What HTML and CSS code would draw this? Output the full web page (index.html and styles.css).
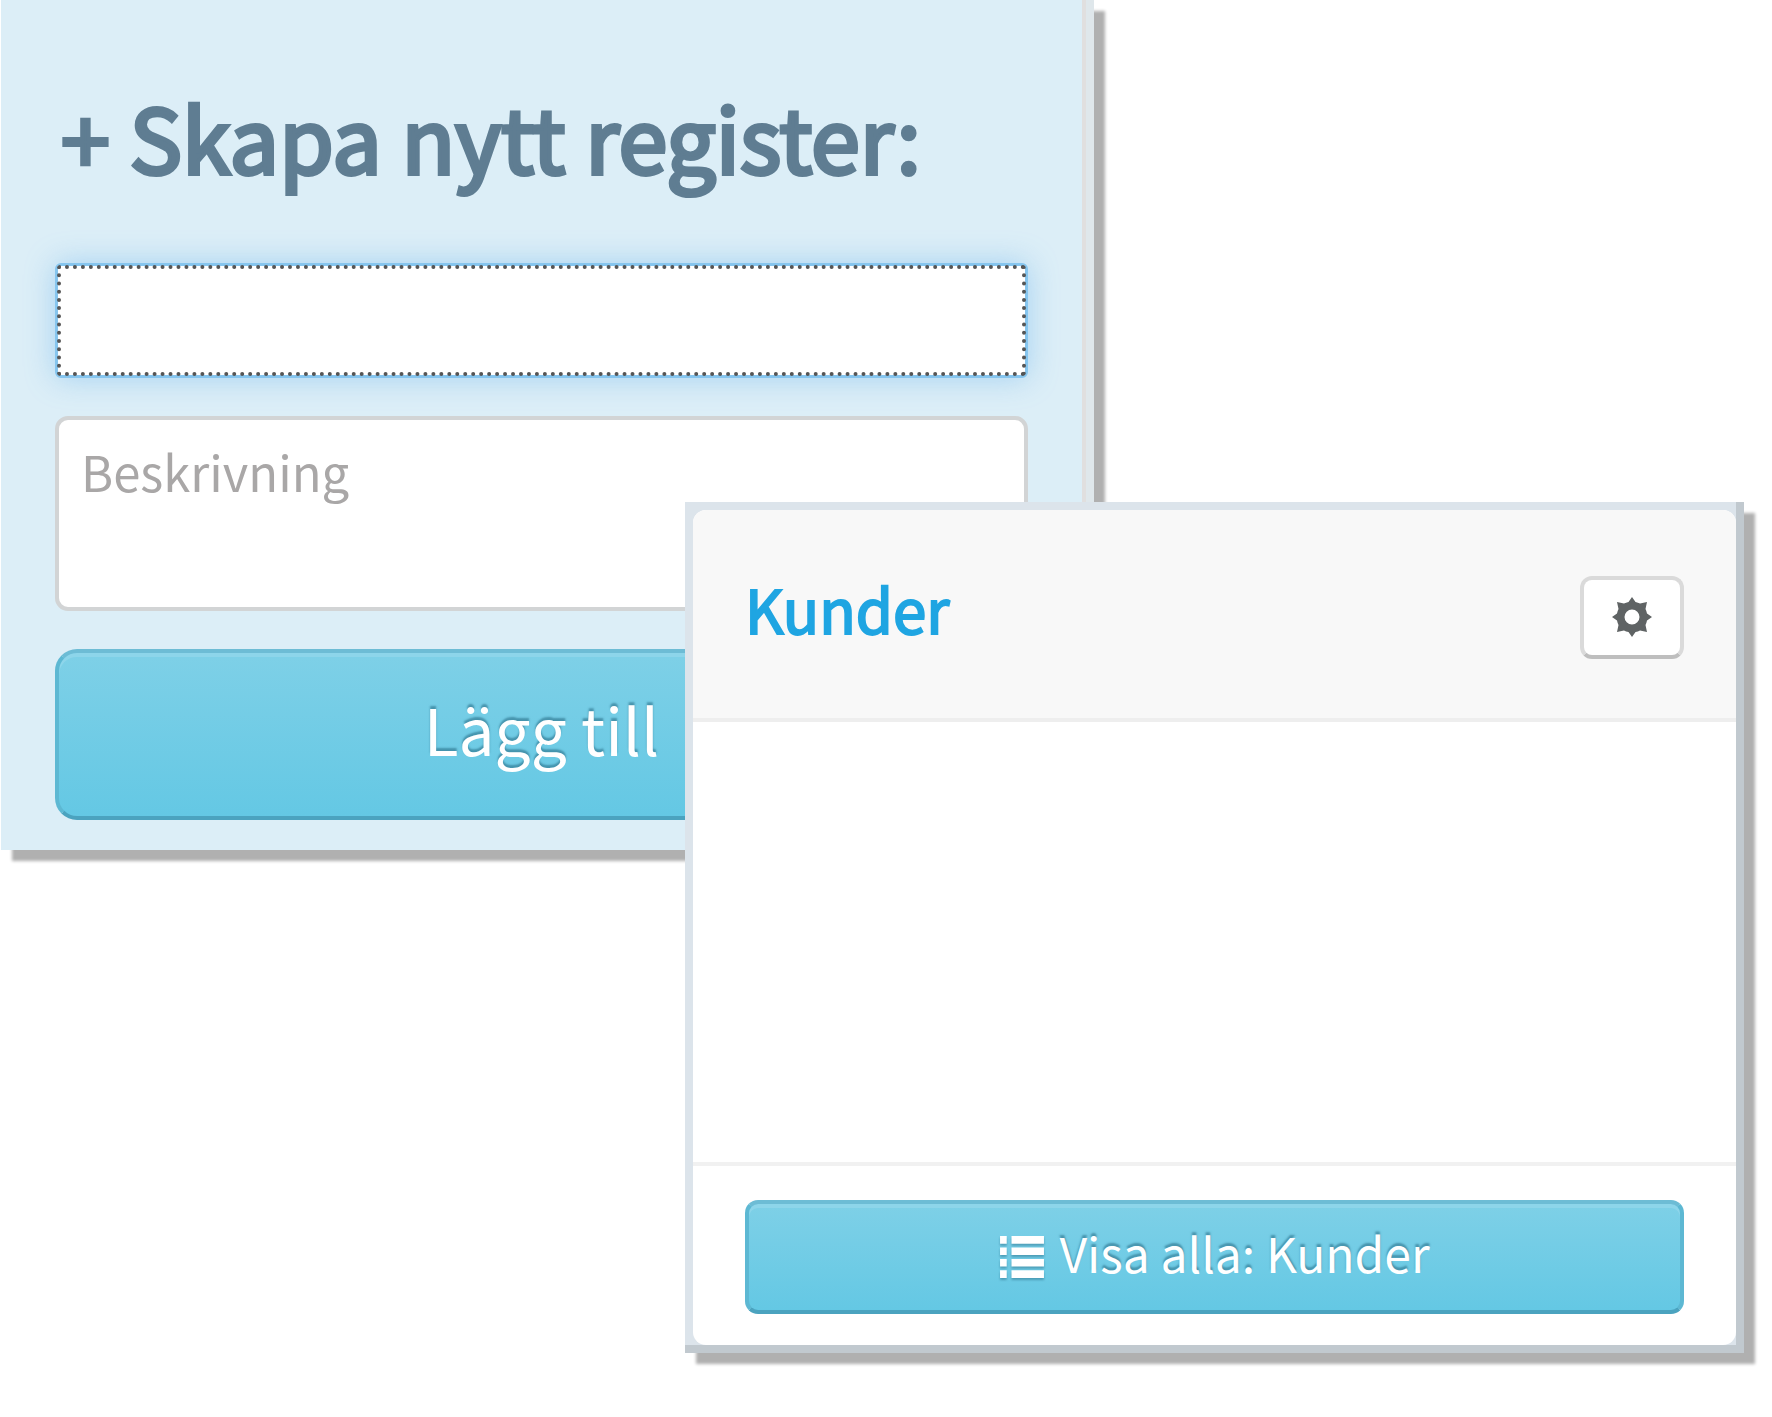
FILE: index.html
```
<!DOCTYPE html>
<html lang="sv">
<head>
    <meta charset="UTF-8">
    <meta name="viewport" content="width=device-width, initial-scale=1.0">
    <title>Register</title>
    <link rel="stylesheet" href="styles.css">
</head>
<body>
    <main class="stage">
        <form class="panel">
            <h1 id="formTitle">+ Skapa nytt register:</h1>
            <input class="name" type="text" name="name" aria-labelledby="formTitle">
            <textarea class="description" name="description" placeholder="Beskrivning" aria-label="Beskrivning"></textarea>
            <button class="btn btn-large" type="button">Lägg till</button>
        </form>

        <section class="card">
            <div class="card-inner">
                <header class="card-header">
                    <h2><a href="#">Kunder</a></h2>
                    <button class="settings" type="button" aria-label="Inställningar">
                        <svg class="gear" viewBox="0 0 40 40">
                            <path fill-rule="evenodd" d="M20 0 L23.500 5 Q26 5.500 28 6.500 L35 5 L33.500 12 Q34.500 14 35 16.500 L40 20 L35 23.500 Q34.500 26 33.500 28 L35 35 L28 33.500 Q26 34.500 23.500 35 L20 40 L16.500 35 Q14 34.500 12 33.500 L5 35 L6.500 28 Q5.500 26 5 23.500 L0 20 L5 16.500 Q5.500 14 6.500 12 L5 5 L12 6.500 Q14 5.500 16.500 5 Z M20 12.500 A7.500 7.500 0 1 0 20 27.500 A7.500 7.500 0 1 0 20 12.500 Z"/>
                        </svg>
                    </button>
                </header>
                <div class="card-body"></div>
                <footer class="card-footer">
                    <button class="btn" type="button">
                        <svg class="list" viewBox="0 0 46 44">
                            <path d="M0 0h7v8H0z M12 0h34v8H12z M0 12h7v8H0z M12 12h34v8H12z M0 24h7v8H0z M12 24h34v8H12z M0 36h7v8H0z M12 36h34v8H12z"/>
                        </svg>
                        <span>Visa alla: Kunder</span>
                    </button>
                </footer>
            </div>
        </section>
    </main>
</body>
</html>
```
FILE: styles.css
```
* {
    box-sizing: border-box;
}

body {
    min-height: 100vh;
    margin: 0;
    padding-left: 1px;
    background-color: #fff;
    font-family: "Noto Sans CJK JP", "Noto Sans", sans-serif;
}

h1, h2 {
    margin: 0;
    font-weight: 400;
}

/* the two boxes share the middle cell, so the card lies over the form */
.stage {
    display: grid;
    grid-template-columns: 684fr 409fr 650fr 28fr;
    grid-template-rows: 502px 348px auto;
    padding-bottom: 40px;
}

.panel {
    grid-area: 1 / 1 / 3 / 3;
    display: flex;
    flex-direction: column;
    gap: 38px;
    padding: 86px 58px 30px 54px;
    border-right: 8px solid #dfe7eb;
    background-color: #dceef7;
    box-shadow: inset -4px 0 #e0dfdf, 11px 11px 3px #b0b0b0;
}

.panel h1 {
    margin-bottom: 39px;
    padding-left: 6px;
    color: #5f7d92;
    font-size: 88px;
    line-height: 100px;
    -webkit-text-stroke: 4px #5f7d92;
}

.name, .description {
    display: block;
    width: 100%;
    margin: 0;
    background-color: #fff;
    font: inherit;
    font-size: 49px;
}

.name {
    height: 115px;
    padding: 0 24px;
    border: 3px solid #86c5ee;
    border-radius: 6px;
    outline: 4px dotted #555;
    outline-offset: -6px;
    box-shadow: 0 0 30px rgba(82, 168, 236, 0.4);
}

.description {
    height: 195px;
    padding: 20px 22px;
    border: 4px solid #d2d4d5;
    border-radius: 13px;
    line-height: 62px;
    resize: none;
}

.description::placeholder {
    color: #a9a7a7;
    opacity: 1;
}

.btn {
    display: flex;
    align-items: center;
    justify-content: center;
    gap: 14px;
    width: 100%;
    height: 114px;
    padding: 0 0 10px;
    border: 4px solid #5db8d3;
    border-top-color: #6dbcd5;
    border-bottom-color: #4ba3bf;
    border-radius: 13px;
    background: linear-gradient(#7ed0e7, #64c8e4);
    box-shadow: inset 0 4px #8dd5ea;
    color: #fff;
    font: inherit;
    font-size: 48px;
    text-shadow: 0 -3px 2px rgba(40, 110, 135, 0.6);
}

.btn-large {
    height: 171px;
    padding-bottom: 14px;
    border-radius: 22px;
    font-size: 64px;
}

.card {
    grid-area: 2 / 2 / 4 / 4;
    padding: 8px;
    background: linear-gradient(#dce4eb, #dce4eb) left top / calc(100% - 8px) calc(100% - 8px) no-repeat #c1c9cf;
    box-shadow: 11px 11px 3px #b0b0b0;
}

.card-inner {
    overflow: hidden;
    border-radius: 13px;
    background-color: #fff;
}

.card-header {
    display: flex;
    align-items: center;
    justify-content: space-between;
    height: 212px;
    padding: 6px 52px 0;
    border-bottom: 4px solid #eee;
    background-color: #f8f8f8;
}

.card-header h2 {
    padding-bottom: 18px;
    font-size: 60px;
    line-height: 80px;
    -webkit-text-stroke: 2px #1fa5e2;
}

.card-header a {
    color: #1fa5e2;
    text-decoration: none;
}

.settings {
    display: flex;
    align-items: center;
    justify-content: center;
    width: 104px;
    height: 83px;
    padding: 0;
    border: 4px solid #dadada;
    border-bottom-color: #bebebe;
    border-radius: 12px;
    background-color: #fff;
}

.gear {
    width: 40px;
    height: 40px;
    fill: #5f6364;
}

.card-body {
    height: 440px;
}

.card-footer {
    padding: 34px 52px 31px;
    border-top: 4px solid #f1f1f1;
}

.list {
    width: 46px;
    height: 42px;
    margin-top: 10px;
    fill: #fff;
    filter: drop-shadow(0 2px 1px rgba(40, 110, 135, 0.5));
}
```
